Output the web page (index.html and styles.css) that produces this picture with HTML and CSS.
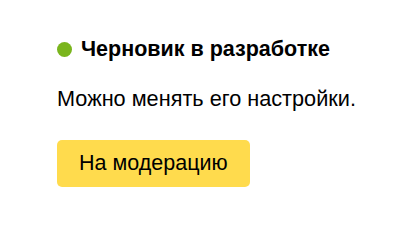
FILE: index.html
```html
<!DOCTYPE html>
<html lang="ru">

<head>
    <meta charset="UTF-8">
    <title>Черновик в разработке</title>
    <link rel="stylesheet" href="styles.css">
</head>

<body>
    <div class="status-card">
        <div class="status-title">
            <span class="status-dot"></span>
            <span>Черновик в разработке</span>
        </div>
        <p class="status-text">Можно менять его настройки.</p>
        <button class="moderate-btn">На модерацию</button>
    </div>
</body>

</html>
```

FILE: styles.css
```css
body {
    margin: 0;
    font-family: "Liberation Sans", Arial, sans-serif;
    background-color: #fff;
    color: #000;
}

.status-card {
    padding: 36px 0 0 57px;
    display: flex;
    flex-direction: column;
    align-items: flex-start;
}

.status-title {
    display: flex;
    align-items: center;
    gap: 9px;
    font-size: 21.5px;
    font-weight: bold;
    line-height: 26px;
}

.status-dot {
    width: 15px;
    height: 15px;
    border-radius: 50%;
    background-color: #7ab51d;
    /* зелёный индикатор */
}

.status-text {
    margin: 24px 0 0 0;
    font-size: 21.7px;
    line-height: 26px;
}

.moderate-btn {
    margin-top: 28px;
    height: 47px;
    padding: 0 22px;
    font-family: inherit;
    font-size: 21.5px;
    color: #000;
    background-color: #ffdb4d;
    /* жёлтая кнопка */
    border: none;
    border-radius: 5px;
    cursor: pointer;
}
```
